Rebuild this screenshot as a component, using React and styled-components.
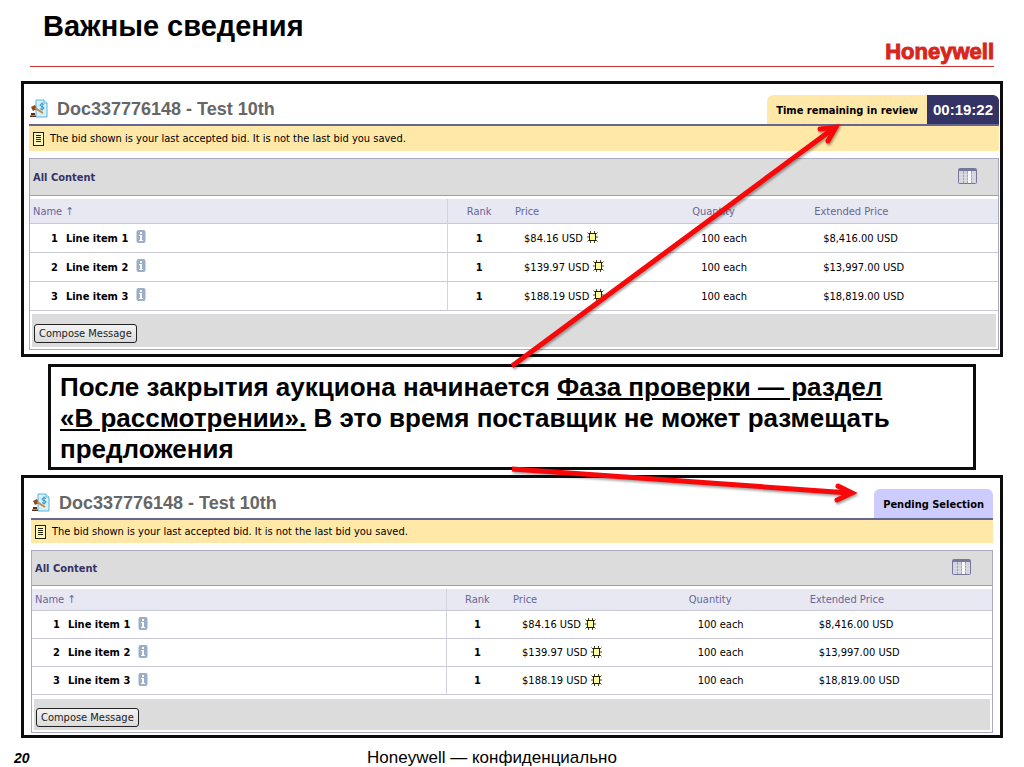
import styled, { createGlobalStyle } from "styled-components";

const GlobalStyle = createGlobalStyle`
  * {
    box-sizing: border-box;
  }

  body {
    margin: 0;
    background: #ffffff;
    color: #000000;
    font-family: "Liberation Sans", Arial, sans-serif;
  }
`;

const uiFont = `"DejaVu Sans Condensed", "Noto Sans", sans-serif`;
const headFont = `"Liberation Sans", Arial, sans-serif`;

const Slide = styled.main`
  position: relative;
  display: flex;
  flex-direction: column;
  min-height: 100vh;
  padding: 0 21px;
`;

const SlideHeader = styled.header`
  display: flex;
  justify-content: space-between;
  align-items: flex-end;
  height: 67px;
  margin: 0 9px 14px;
  border-bottom: 1px solid #c9302c;
`;

const SlideTitle = styled.h1`
  margin: 0;
  padding-left: 13px;
  align-self: flex-start;
  font-size: 29px;
  line-height: 52px;
  font-weight: 700;
`;

const Brand = styled.span`
  color: #d8261c;
  font-size: 22px;
  line-height: 28px;
  font-weight: 700;
  -webkit-text-stroke: 1px #d8261c;
`;

const Panel = styled.section`
  padding: ${(props) => (props.$dense ? "0 7px 2px" : "0 1px 4px 5px")};
  border: 3px solid #0c0c0c;
  font-family: ${uiFont};
`;

const DocHeader = styled.header`
  display: flex;
  align-items: flex-end;
  height: 42px;
  border-bottom: 2px solid #66668f;
`;

const DocTitle = styled.h2`
  display: flex;
  align-items: center;
  gap: 8px;
  flex: 1;
  margin: 0;
  color: #666666;
  font-family: ${headFont};
  font-size: 18px;
  line-height: 30px;
  font-weight: 700;
`;

const StatusTab = styled.div`
  padding: 0 9px;
  height: 29px;
  border-radius: ${(props) => (props.$pending ? "6px 6px 0 0" : "6px 0 0 0")};
  background: ${(props) => (props.$pending ? "#ccccff" : "#ffe8a8")};
  font-size: 11px;
  line-height: 32px;
  font-weight: 700;
`;

const Timer = styled.time`
  padding: 0 6px;
  height: 29px;
  border-radius: 0 6px 0 0;
  background: #333366;
  color: #ffffff;
  font-family: ${headFont};
  font-size: 15px;
  line-height: 30px;
  font-weight: 700;
`;

const Notice = styled.p`
  display: flex;
  align-items: center;
  gap: 6px;
  height: ${(props) => (props.$dense ? "23px" : "25px")};
  margin: 0 0 7px;
  padding-left: 4px;
  background: #ffe8a8;
  font-size: 11px;
`;

const Grid = styled.div`
  border: 1px solid #a9a9c2;
`;

const GridBar = styled.div`
  display: flex;
  justify-content: space-between;
  align-items: center;
  height: ${(props) => (props.$dense ? "35px" : "37px")};
  margin-bottom: 3px;
  padding: 0 21px 0 3px;
  border-bottom: 1px solid #9c9cb4;
  background: #dcdcdc;
`;

const GridTitle = styled.h3`
  margin: 0;
  color: #333366;
  font-size: 11px;
  font-weight: 700;
`;

const IconButton = styled.button`
  display: flex;
  padding: 0 0 2px;
  border: 0;
  background: none;
  cursor: pointer;
`;

const Table = styled.table`
  width: 100%;
  table-layout: fixed;
  border-collapse: separate;
  border-spacing: 0;
  font-size: 11px;

  th,
  td {
    padding: 0 0 0 12px;
    border-bottom: 1px solid #c8c8d8;
    text-align: left;
    white-space: nowrap;
  }

  th {
    height: ${(props) => (props.$dense ? "22px" : "25px")};
    padding-left: 3px;
    background: #e8e8f2;
    color: #666699;
    font-weight: 400;
  }

  td {
    height: ${(props) => (props.$dense ? "28px" : "29px")};
  }

  tr > :first-child {
    border-right: 1px solid #d2d2e0;
  }

  tr > :nth-child(2) {
    padding: 0 2px 0 0;
    text-align: center;
  }
`;

const Col = styled.col`
  width: ${(props) => props.$width};
`;

const ItemName = styled.div`
  display: flex;
  align-items: center;
  gap: 8px;
  padding-left: 9px;
  font-weight: 700;
`;

const Price = styled.div`
  display: flex;
  align-items: center;
  gap: 4px;
`;

const GridFooter = styled.div`
  display: flex;
  align-items: center;
  height: ${(props) => (props.$dense ? "31px" : "33px")};
  margin: ${(props) => (props.$dense ? "4px 2px 2px" : "3px 2px 2px")};
  padding: 6px 2px 0;
  background: #dcdcdc;
`;

const ComposeButton = styled.button`
  height: 19px;
  padding: 0 4px;
  border: 1px solid #222222;
  border-radius: 3px;
  background: linear-gradient(#f4f4f4, #dadada);
  color: #222222;
  font-family: ${uiFont};
  font-size: 11px;
  line-height: 16px;
`;

const Callout = styled.p`
  margin: 7px 27px 5px;
  padding: 5px 76px 2px 9px;
  border: 3px solid #0c0c0c;
  font-size: 26px;
  line-height: 31px;
  font-weight: 700;
`;

const CalloutLine = styled.span`
  display: block;
`;

const SlideFooter = styled.footer`
  display: grid;
  grid-template-columns: 1fr auto 1fr;
  align-items: center;
  margin: 7px 33px 0 -7px;
  font-size: 17px;
  line-height: 26px;
`;

const PageNumber = styled.span`
  font-size: 14px;
  font-style: italic;
  font-weight: 700;
`;

const Arrows = styled.svg`
  position: absolute;
  top: 0;
  left: 0;
  width: 100%;
  height: 767px;
  pointer-events: none;
  filter: drop-shadow(1px 2px 1px rgba(0, 0, 0, 0.35));
`;

const DocIcon = () => (
  <svg width="20" height="20" viewBox="0 0 20 20" aria-hidden="true">
    <path d="M7 1h8l3 3v14H7z" fill="#d4f0fa" stroke="#5bb4d8" />
    <path d="M15 1v3h3" fill="#ffffff" stroke="#5bb4d8" />
    <path
      d="M15 5.5c-1-1-4-1-4 .6 0 1.8 4 1 4 2.9 0 1.7-3 1.7-4 .6M13 3.5v8"
      fill="none"
      stroke="#2f8fc0"
    />
    <path d="M2 8l4-2 2 4-4 2z" fill="#8a4a20" />
    <path d="M6 9l8 5" stroke="#c08a50" strokeWidth="2" />
    <path d="M2 14h4v2h1v2H1v-2h1z" fill="#5b2c14" />
    <path d="M1 16.5h6" stroke="#c08a50" />
  </svg>
);

const NoteIcon = () => (
  <svg width="11" height="14" viewBox="0 0 11 14" aria-hidden="true">
    <rect x="0.5" y="0.5" width="10" height="13" fill="#fff9b8" stroke="#222211" />
    <path d="M3 3.5h5M3 5.5h5M3 7.5h5M3 9.5h5" stroke="#222211" />
  </svg>
);

const InfoIcon = () => (
  <svg width="10" height="16" viewBox="0 0 10 16" aria-hidden="true">
    <rect x="0.5" y="0" width="9" height="13" rx="2" fill="#9aaec8" />
    <path d="M4 2h2v2H4zM3 5h3v5h1v1H3v-1h1V6H3z" fill="#ffffff" />
  </svg>
);

const BestBidIcon = () => (
  <svg width="11" height="14" viewBox="0 0 11 14" aria-hidden="true">
    <path
      d="M3.5 0v2M7.5 0v2M3.5 9v3M7.5 9v3M0.500 1.5l2 2M10.500 1.5l-2 2M0 6h2M9 6h2M0.500 10.5l2-2M10.500 10.5l-2-2"
      stroke="#333311"
      strokeWidth="0.9"
    />
    <rect x="2.5" y="2.5" width="6" height="7" fill="#ffff99" stroke="#222200" />
  </svg>
);

const ColumnsIcon = () => (
  <svg width="19" height="16" viewBox="0 0 19 16" aria-hidden="true">
    <rect x="0.5" y="0.5" width="18" height="15" rx="1" fill="#d4d4de" stroke="#77779a" />
    <rect x="1" y="1" width="17" height="2" fill="#77779a" />
    <rect x="10" y="3" width="3" height="12" fill="#ffffff" />
    <path d="M5.5 3v12M9.5 3v12M13.5 3v12" stroke="#a3a3bb" />
    <path d="M1 6.5h17M1 9.5h17M1 12.5h17" stroke="#e2e2ea" strokeOpacity="0.6" />
  </svg>
);

const items = [
  { id: 1, name: "Line item 1", price: "$84.16 USD", total: "$8,416.00 USD" },
  { id: 2, name: "Line item 2", price: "$139.97 USD", total: "$13,997.00 USD" },
  { id: 3, name: "Line item 3", price: "$188.19 USD", total: "$18,819.00 USD" },
];

const BidPanel = ({ dense, children }) => (
  <Panel $dense={dense}>
    <DocHeader>
      <DocTitle>
        <DocIcon />
        Doc337776148 - Test 10th
      </DocTitle>
      {children}
    </DocHeader>
    <Notice $dense={dense}>
      <NoteIcon />
      The bid shown is your last accepted bid. It is not the last bid you saved.
    </Notice>
    <Grid>
      <GridBar $dense={dense}>
        <GridTitle>All Content</GridTitle>
        <IconButton type="button" aria-label="Columns">
          <ColumnsIcon />
        </IconButton>
      </GridBar>
      <Table $dense={dense}>
        <colgroup>
          <Col $width="43.2%" />
          <Col $width="6.6%" />
          <Col $width="18.3%" />
          <Col $width="12.6%" />
          <Col />
        </colgroup>
        <thead>
          <tr>
            <th>Name ↑</th>
            <th>Rank</th>
            <th>Price</th>
            <th>Quantity</th>
            <th>Extended Price</th>
          </tr>
        </thead>
        <tbody>
          {items.map((item) => (
            <tr key={item.id}>
              <td>
                <ItemName>
                  <span>{item.id}</span>
                  <span>{item.name}</span>
                  <InfoIcon />
                </ItemName>
              </td>
              <td>
                <b>1</b>
              </td>
              <td>
                <Price>
                  {item.price}
                  <BestBidIcon />
                </Price>
              </td>
              <td>100 each</td>
              <td>{item.total}</td>
            </tr>
          ))}
        </tbody>
      </Table>
      <GridFooter $dense={dense}>
        <ComposeButton type="button">Compose Message</ComposeButton>
      </GridFooter>
    </Grid>
  </Panel>
);

const App = () => {
  return (
    <>
      <GlobalStyle />
      <Slide>
        <SlideHeader>
          <SlideTitle>Важные сведения</SlideTitle>
          <Brand>Honeywell</Brand>
        </SlideHeader>

        <BidPanel>
          <StatusTab>Time remaining in review</StatusTab>
          <Timer>00:19:22</Timer>
        </BidPanel>

        <Callout>
          <CalloutLine>
            После закрытия аукциона начинается <u>Фаза проверки — раздел</u>
          </CalloutLine>
          <CalloutLine>
            <u>«В рассмотрении».</u> В это время поставщик не может размещать
          </CalloutLine>
          <CalloutLine>предложения</CalloutLine>
        </Callout>

        <BidPanel dense>
          <StatusTab $pending>Pending Selection</StatusTab>
        </BidPanel>

        <SlideFooter>
          <PageNumber>20</PageNumber>
          <span>Honeywell — конфиденциально</span>
        </SlideFooter>

        <Arrows viewBox="0 0 1024 767" fill="none" stroke="#f80808" strokeWidth="5">
          <path d="M512 366L834 128" />
          <path d="M820 129L836 127L828 141" strokeLinecap="round" />
          <path d="M512 469L850 493" />
          <path d="M838 486L852 493L837 500" strokeLinecap="round" />
        </Arrows>
      </Slide>
    </>
  );
};

export default App;
